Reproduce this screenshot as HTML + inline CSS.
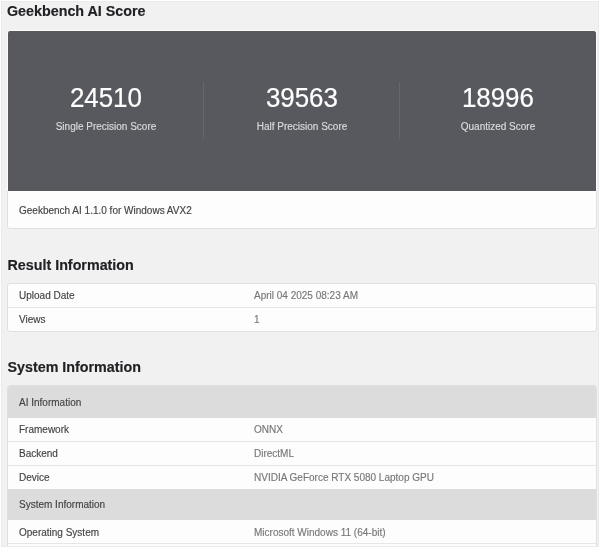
<!DOCTYPE html>
<html><head><meta charset="utf-8">
<style>
html,body{margin:0;padding:0;}
body{-webkit-text-stroke:0.15px currentColor;width:600px;height:548px;background:#fff;position:relative;overflow:hidden;font-family:"Liberation Sans",sans-serif;}
#frame{position:absolute;left:1px;top:1px;width:596px;height:544px;border:1px solid #eaeaea;background:#f1f1f1;}
#content{position:absolute;left:0;top:0;width:600px;height:548px;clip-path:inset(2px 2px 2px 2px);}
#wrap{position:absolute;left:0;top:0;width:600px;height:548px;filter:blur(0.35px);}
.abs{position:absolute;white-space:nowrap;}
h2{position:absolute;margin:0;font-size:14.3px;line-height:20px;font-weight:bold;color:#202124;white-space:nowrap;}
.card{position:absolute;left:7px;width:588px;background:#fdfdfd;border:1px solid #e0e0e0;border-radius:3px;overflow:hidden;}
.dark{position:absolute;left:-1px;top:-1px;width:588px;height:160px;background:#58595e;border:1px solid #fbfbfb;border-bottom:none;border-radius:3px 3px 0 0;}
.col{position:absolute;top:0;width:196px;height:160px;text-align:center;}
.num{position:absolute;left:0;width:204px;font-size:27px;line-height:30px;color:#fff;transform:scaleX(0.96);transform-origin:0 0;-webkit-text-stroke:0.2px #fff;}
.lab{position:absolute;left:0;width:196px;font-size:10px;line-height:14px;color:#dcdcde;}
.div{position:absolute;top:51px;width:1px;height:57px;background:#66676c;}
.t{font-size:10px;line-height:14px;color:#444;}
.row{position:absolute;left:0;width:588px;height:23.8px;}
.row .k{position:absolute;left:11px;color:#444;font-size:10px;line-height:14px;}
.row .v{position:absolute;left:246px;color:#787878;font-size:10px;line-height:14px;}
.line{position:absolute;left:0;width:588px;height:1px;background:#e6e6e6;}
.hdr{position:absolute;left:0;width:588px;background:#dcdcdc;}
</style></head><body>
<div id="wrap">
<div id="frame"></div>
<div id="content">
<h2 style="left:7px;top:1px">Geekbench AI Score</h2>

<div class="card" style="top:30px;height:197px;overflow:visible">
  <div class="dark">
    <div class="col" style="left:0">
      <div class="num" style="top:52px">24510</div>
      <div class="lab" style="top:89px">Single Precision Score</div>
    </div>
    <div class="div" style="left:195px"></div>
    <div class="col" style="left:196px">
      <div class="num" style="top:52px">39563</div>
      <div class="lab" style="top:89px">Half Precision Score</div>
    </div>
    <div class="div" style="left:391px"></div>
    <div class="col" style="left:392px">
      <div class="num" style="top:52px">18996</div>
      <div class="lab" style="top:89px">Quantized Score</div>
    </div>
  </div>
  <div class="abs t" style="left:11px;top:173px">Geekbench AI 1.1.0 for Windows AVX2</div>
</div>

<h2 style="left:7.5px;top:255px">Result Information</h2>
<div class="card" style="top:283px;height:47px;">
  <div class="row" style="top:0"><div class="k" style="top:5px">Upload Date</div><div class="v" style="top:5px">April 04 2025 08:23 AM</div></div>
  <div class="line" style="top:23px"></div>
  <div class="row" style="top:24px"><div class="k" style="top:5px">Views</div><div class="v" style="top:5px">1</div></div>
</div>

<h2 style="left:7.5px;top:357px">System Information</h2>
<div class="card" style="top:385px;height:170px;">
  <div class="hdr" style="top:0;height:32px"></div>
  <div class="abs t" style="left:11px;top:10px;color:#444">AI Information</div>
  <div class="row" style="top:32px"><div class="k" style="top:5px">Framework</div><div class="v" style="top:5px">ONNX</div></div>
  <div class="line" style="top:55px"></div>
  <div class="row" style="top:56px"><div class="k" style="top:5px">Backend</div><div class="v" style="top:5px">DirectML</div></div>
  <div class="line" style="top:79px"></div>
  <div class="row" style="top:80px"><div class="k" style="top:5px">Device</div><div class="v" style="top:5px">NVIDIA GeForce RTX 5080 Laptop GPU</div></div>
  <div class="hdr" style="top:103px;height:31px"></div>
  <div class="abs t" style="left:11px;top:112px;color:#444">System Information</div>
  <div class="row" style="top:134px"><div class="k" style="top:6px">Operating System</div><div class="v" style="top:6px">Microsoft Windows 11 (64-bit)</div></div>
  <div class="line" style="top:157px"></div>
</div>
</div>
</div>
</body></html>
